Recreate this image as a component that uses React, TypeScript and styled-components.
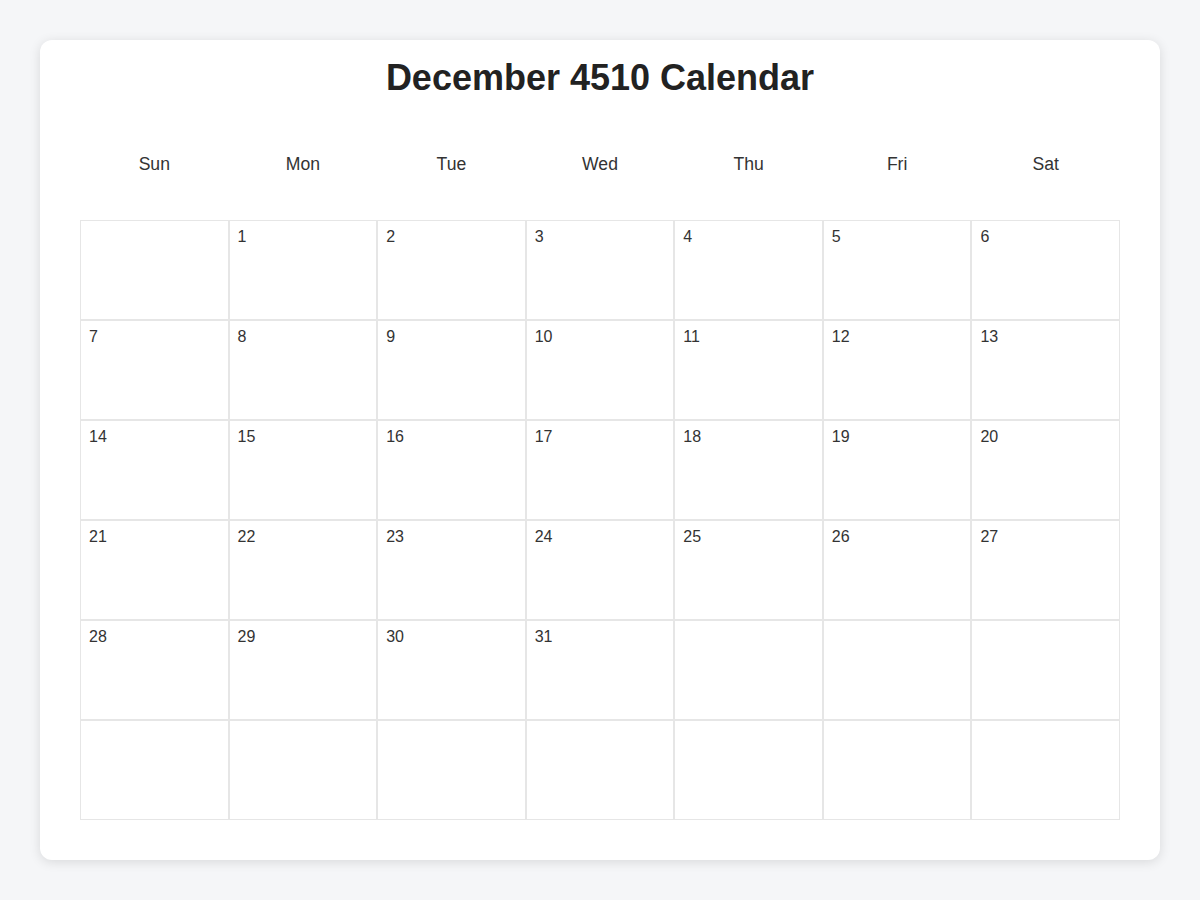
import React from "react";
import styled, { createGlobalStyle } from "styled-components";

const GlobalStyle = createGlobalStyle`
  html, body {
    margin: 0;
    padding: 0;
    background: #f5f6f8;
    font-family: "Liberation Sans", Arial, Helvetica, sans-serif;
  }
  * { box-sizing: border-box; }
`;

const Page = styled.div`
  padding: 40px;
  min-height: 900px;
`;

const Card = styled.div`
  background: #ffffff;
  border-radius: 12px;
  box-shadow: 0 2px 12px rgba(0, 0, 0, 0.12);
  padding: 17px 40px 40px;
`;

const Title = styled.h1`
  margin: 0 0 46px;
  text-align: center;
  font-size: 36px;
  line-height: 1.15;
  font-weight: 700;
  color: #222222;
`;

const WeekRow = styled.div`
  display: grid;
  grid-template-columns: repeat(7, 1fr);
  margin-bottom: 35px;
`;

const WeekDay = styled.div`
  padding: 10px 0;
  text-align: center;
  font-size: 17.6px;
  color: #333333;
`;

const Grid = styled.div`
  display: grid;
  grid-template-columns: repeat(7, 1fr);
`;

const Cell = styled.div`
  height: 100px;
  border: 1px solid #e6e6e6;
  padding: 7px 8px;
  font-size: 16px;
  color: #333333;
`;

const days = ["Sun", "Mon", "Tue", "Wed", "Thu", "Fri", "Sat"];

export default function App() {
  const cells: (number | null)[] = [];
  const offset = 1;
  for (let i = 0; i < 42; i++) {
    const d = i - offset + 1;
    cells.push(d >= 1 && d <= 31 ? d : null);
  }
  return (
    <>
      <GlobalStyle />
      <Page>
        <Card>
          <Title>December 4510 Calendar</Title>
          <WeekRow>
            {days.map((d) => (
              <WeekDay key={d}>{d}</WeekDay>
            ))}
          </WeekRow>
          <Grid>
            {cells.map((c, i) => (
              <Cell key={i}>{c ?? ""}</Cell>
            ))}
          </Grid>
        </Card>
      </Page>
    </>
  );
}
